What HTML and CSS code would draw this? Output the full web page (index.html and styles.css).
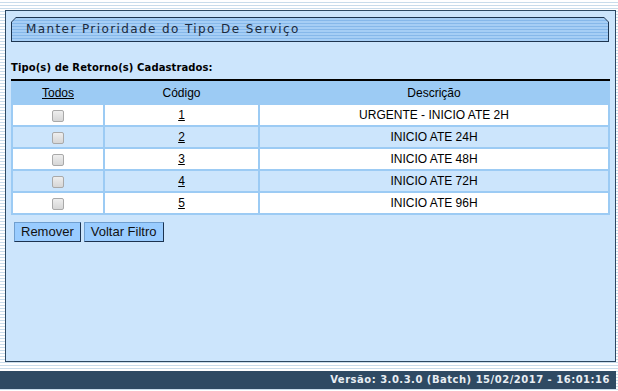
FILE: index.html
```html
<!DOCTYPE html>
<html lang="pt">
<head>
<meta charset="utf-8">
<title>Manter Prioridade do Tipo De Serviço</title>
<link rel="stylesheet" href="styles.css">
</head>
<body>
<div class="page">
  <div class="panel">
    <div class="titlebar">
      <div class="titlebar-inner">Manter Prioridade do Tipo De Serviço</div>
    </div>
    <div class="label">Tipo(s) de Retorno(s) Cadastrados:</div>
    <table class="grid">
      <thead>
        <tr>
          <th class="c1"><a href="#">Todos</a></th>
          <th class="c2">Código</th>
          <th class="c3">Descrição</th>
        </tr>
      </thead>
      <tbody>
        <tr class="odd"><td><input type="checkbox" class="chk"></td><td><a href="#">1</a></td><td>URGENTE - INICIO ATE 2H</td></tr>
        <tr class="even"><td><input type="checkbox" class="chk"></td><td><a href="#">2</a></td><td>INICIO ATE 24H</td></tr>
        <tr class="odd"><td><input type="checkbox" class="chk"></td><td><a href="#">3</a></td><td>INICIO ATE 48H</td></tr>
        <tr class="even"><td><input type="checkbox" class="chk"></td><td><a href="#">4</a></td><td>INICIO ATE 72H</td></tr>
        <tr class="odd"><td><input type="checkbox" class="chk"></td><td><a href="#">5</a></td><td>INICIO ATE 96H</td></tr>
      </tbody>
    </table>
    <div class="actions">
      <button class="btn">Remover</button>
      <button class="btn">Voltar Filtro</button>
    </div>
  </div>
  <div class="footer">Versão: 3.0.3.0 (Batch) 15/02/2017 - 16:01:16</div>
</div>
</body>
</html>
```

FILE: styles.css
```css
html, body {
  margin: 0;
  padding: 0;
}
body {
  width: 618px;
  height: 391px;
  overflow: hidden;
  background: repeating-linear-gradient(to bottom, #ffffff 0, #ffffff 2px, #c9dceb 2px, #c9dceb 3px);
  font-family: "DejaVu Sans", Verdana, sans-serif;
}
.page {
  padding-top: 10px;
}
.panel {
  margin-left: 5px;
  width: 598px;
  height: 344px;
  border: 1px solid #2c4862;
  background: #cce5fc;
  padding: 6px 6px 0 5px;
}
.titlebar {
  height: 25px;
  background: #1d3550;
  clip-path: polygon(5px 0, calc(100% - 5px) 0, 100% 5px, 100% 100%, 0 100%, 0 5px);
  padding: 1px;
  box-sizing: border-box;
  width: 598px;
}
.titlebar-inner {
  height: 100%;
  clip-path: polygon(4px 0, calc(100% - 4px) 0, 100% 4px, 100% 100%, 0 100%, 0 4px);
  background: repeating-linear-gradient(to bottom, #a6cef5 0, #a6cef5 2px, #86b8ea 2px, #86b8ea 3px);
  color: #1b2a3d;
  font-size: 12px;
  letter-spacing: 1.4px;
  line-height: 23px;
  padding-left: 14px;
}
.label {
  margin-top: 20px;
  font-size: 10px;
  font-weight: bold;
  letter-spacing: 0.1px;
  color: #000;
  height: 17px;
  line-height: 12px;
}
.grid {
  width: 599px;
  border-collapse: separate;
  border-spacing: 2px;
  border-top: 2px solid #000;
  background: #9ccbf4;
  font-family: "Liberation Sans", Arial, sans-serif;
  font-size: 12px;
  color: #000;
}
.grid th, .grid td {
  height: 20px;
  padding: 0;
  text-align: center;
  vertical-align: middle;
}
.grid th {
  font-weight: normal;
  background: #9ccbf4;
}
.grid .c1 { width: 90px; }
.grid .c2 { width: 153px; }
.grid a {
  color: #000;
  text-decoration: underline;
}
.grid tr.odd td { background: #ffffff; }
.grid tr.even td { background: #cce5fc; }
.chk {
  appearance: none;
  -webkit-appearance: none;
  width: 12px;
  height: 12px;
  margin: 0;
  border: 1px solid #a9a9a9;
  border-radius: 2px;
  background: linear-gradient(#eeeeee, #d6d6d6);
  vertical-align: middle;
  box-sizing: border-box;
}
.actions {
  display: flex;
  gap: 3px;
  margin-top: 7px;
  padding-left: 3px;
}
.btn {
  height: 20px;
  padding: 0 6px;
  margin: 0;
  font-family: "Liberation Sans", Arial, sans-serif;
  font-size: 13px;
  color: #111;
  background: #99ccff;
  border: 1px solid;
  border-color: #6f9fd0 #1c3350 #1c3350 #6f9fd0;
  line-height: 18px;
}
.footer {
  margin-top: 9px;
  width: 616px;
  height: 18px;
  box-sizing: border-box;
  background: #2f4a63;
  color: #e9eef3;
  font-size: 10px;
  font-weight: bold;
  letter-spacing: 0.5px;
  line-height: 18px;
  text-align: right;
  padding-right: 6px;
}
```
